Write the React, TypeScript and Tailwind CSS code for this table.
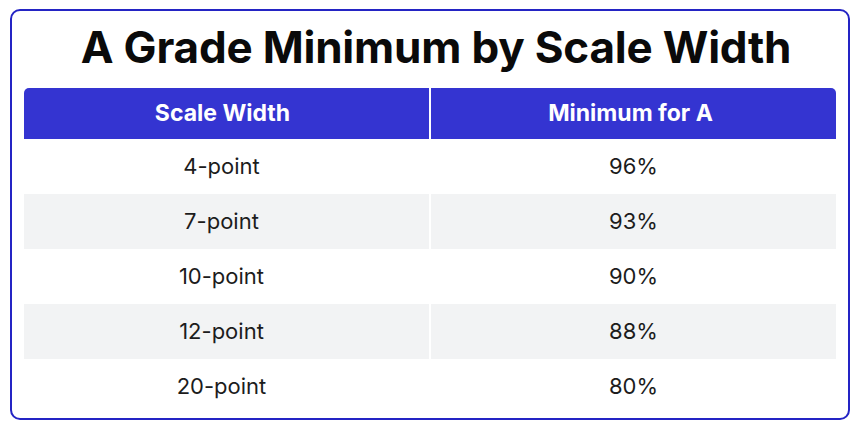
const rows = [
  { scale: "4-point", min: "96%" },
  { scale: "7-point", min: "93%" },
  { scale: "10-point", min: "90%" },
  { scale: "12-point", min: "88%" },
  { scale: "20-point", min: "80%" },
];

export default function App() {
  return (
    <div className="w-[860px] h-[430px] bg-white pt-[9px] px-[10px] font-['Inter','Liberation_Sans',sans-serif]">
      <div className="h-[411px] border-2 border-[#2424c4] rounded-[10px] px-[12px]">
        <h1 className="h-[77px] pb-[5px] pl-[12px] flex items-center justify-center text-[44px] font-bold text-[#0a0a0a] tracking-[-0.2px]">
          A Grade Minimum by Scale Width
        </h1>

        <div className="grid grid-cols-2 gap-x-[2px]">
          <div className="h-[51px] pr-[8px] flex items-center justify-center bg-[#3434d1] rounded-tl-[5px] text-white text-[23px] font-bold">
            Scale Width
          </div>
          <div className="h-[51px] pr-[6px] flex items-center justify-center bg-[#3434d1] rounded-tr-[5px] text-white text-[23px] font-bold">
            Minimum for A
          </div>

          {rows.map((row, i) => {
            const bg = i % 2 === 1 ? "bg-[#f2f3f4]" : "bg-white";
            return [
              <div
                key={row.scale + "-s"}
                className={`h-[55px] pr-[10px] flex items-center justify-center text-[22px] text-[#1c1c1c] ${bg}`}
              >
                {row.scale}
              </div>,
              <div
                key={row.scale + "-m"}
                className={`h-[55px] flex items-center justify-center text-[22px] text-[#1c1c1c] ${bg}`}
              >
                {row.min}
              </div>,
            ];
          })}
        </div>
      </div>
    </div>
  );
}
